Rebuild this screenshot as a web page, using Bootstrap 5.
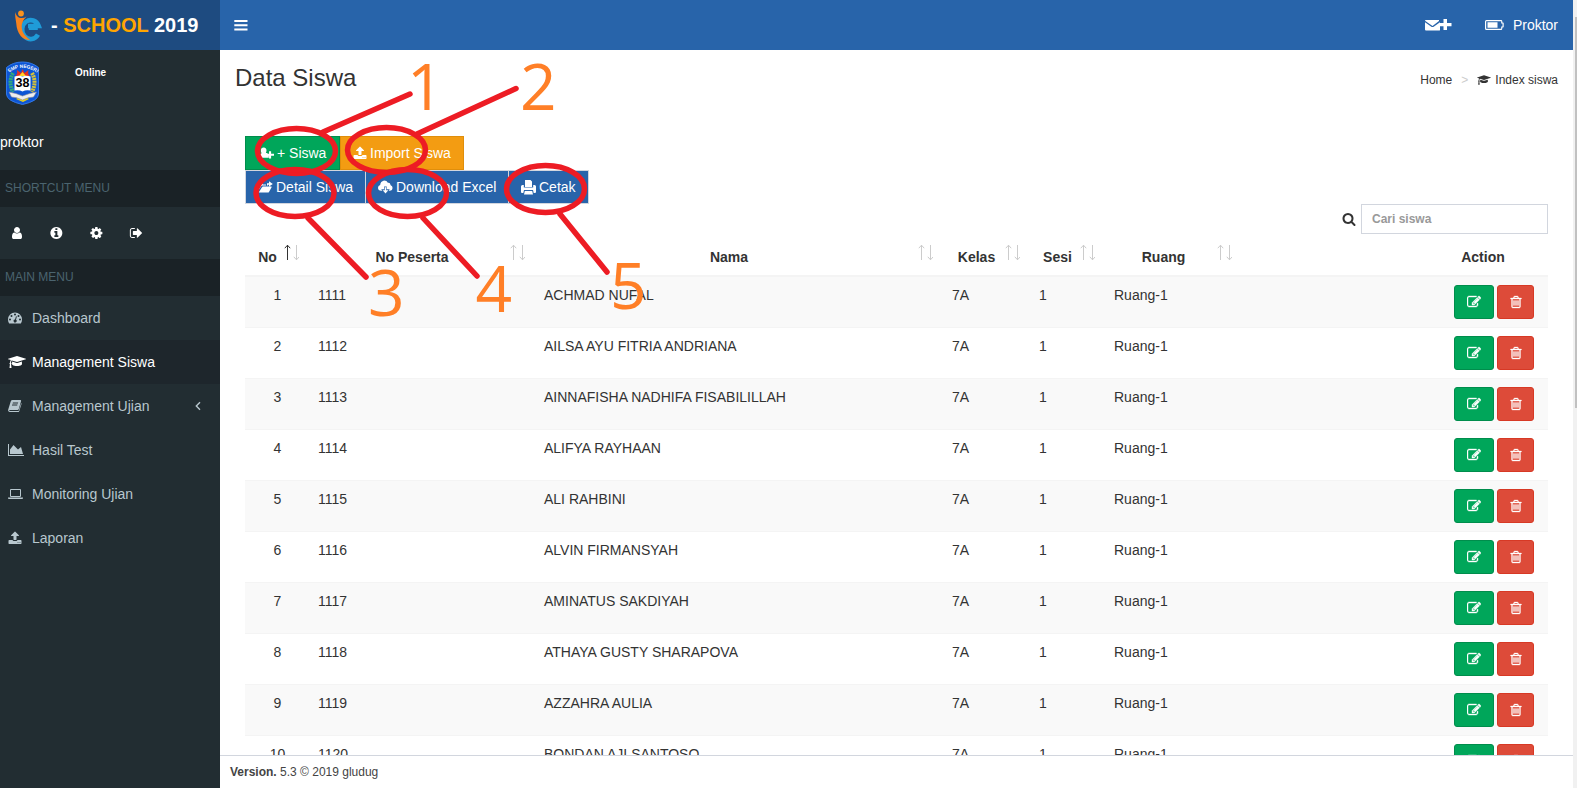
<!DOCTYPE html>
<html lang="id">
<head>
<meta charset="utf-8">
<title>e-School 2019 - Data Siswa</title>
<meta name="viewport" content="width=device-width, initial-scale=1">
<link rel="stylesheet" href="https://cdn.jsdelivr.net/npm/bootstrap@5.3.0/dist/css/bootstrap.min.css">
<style>
body{font-family:"Liberation Sans",Arial,sans-serif;font-size:14px;line-height:20px;color:#333;height:788px;overflow:hidden;background:#fff}
svg{fill:currentColor;display:block;flex:none}
.side{width:220px;background:#222d32;color:#fff}
.brand{height:50px;background:#1e4b80;font-size:20px;font-weight:700;padding-left:14px}
.brand span{color:orange}
.who{height:120px}
.shead{height:37px;background:#1a2226;color:#4b646f;font-size:12px;padding:8px 5px 9px}
.quick{height:52px}
.quick a{width:40px;color:#fff;padding-left:9px}
.menu a.item{height:44px;color:#b8c7ce;text-decoration:none;padding-left:8px;display:flex;align-items:center}
.menu a.item.active{background:#1e262c;color:#fff}
.menu i{width:24px;flex:none}
.topnav{height:50px;background:#2864aa;color:#fff}
.title{font-size:24px;line-height:26px;margin:0;font-weight:400}
.crumbs{font-size:12px}
.main{min-height:0;overflow:hidden}
.tools .btn{border-radius:0;font-size:14px;line-height:20px;color:#fff;display:flex;align-items:center;gap:3px;padding:6px 12px;height:34px;white-space:nowrap}
.g{background:#00a65a;border-color:#008d4c}.o{background:#f39c12;border-color:#e08e0b}
.b{background:#2864aa;border-color:#d2d6de}
.find{width:187px;height:30px;border:1px solid #d2d6de;border-radius:0;font-size:12px;font-weight:700;padding:5px 10px;background:#fff}
.find::placeholder{color:#999;opacity:1}
.grid-siswa{table-layout:fixed;width:1303px;margin:0;color:#333}
.grid-siswa th{padding:0 26px 8px 8px;height:40px;vertical-align:bottom;text-align:center;border-bottom:2px solid #f4f4f4;position:relative}
.grid-siswa th svg{position:absolute;right:9px;bottom:14px}
.grid-siswa td{height:51px;padding:8px 10px;border:0;border-bottom:1px solid #f4f4f4;vertical-align:top}
.grid-siswa tr:nth-child(odd) td{background:#f9f9f9}
.tools .act{height:34px;border-radius:3px;padding:0;justify-content:center}
.act.e{width:40px}.act.d{width:37px;background:#dd4b39;border-color:#d73925}
.foot{height:33px;border-top:1px solid #d2d6de;font-size:12px;color:#444;padding:6px 10px}
.bar{width:4px;background:#f1f1f1}
.bar div{margin:17px 0 0 2px;height:391px;background:#c1c1c1}
.marks{position:absolute;left:0;top:0;pointer-events:none}
</style>
</head>
<body class="d-flex">
<svg width="0" height="0" style="position:absolute">
<defs>
<symbol id="edit" viewBox="0 0 1792 1792"><path d="M888 1184l116-116-152-152-116 116v56h96v96h56zm440-720q-16-16-33 1l-350 350q-17 17-1 33t33-1l350-350q17-17 1-33zm80 594v190q0 119-84.5 203.5t-203.5 84.5h-832q-119 0-203.5-84.5t-84.5-203.5v-832q0-119 84.5-203.5t203.5-84.5h832q63 0 117 25 15 7 18 23 3 17-9 29l-49 49q-14 14-32 8-23-6-45-6h-832q-66 0-113 47t-47 113v832q0 66 47 113t113 47h832q66 0 113-47t47-113v-126q0-13 9-22l64-64q15-15 35-7t20 29zm-96-738l288 288-672 672h-288v-288zm444 132l-92 92-288-288 92-92q28-28 68-28t68 28l152 152q28 28 28 68t-28 68z" stroke="currentColor" stroke-width="50"/></symbol>
<symbol id="trash" viewBox="0 0 1792 1792"><path d="M704 736v576q0 14-9 23t-23 9h-64q-14 0-23-9t-9-23v-576q0-14 9-23t23-9h64q14 0 23 9t9 23zm256 0v576q0 14-9 23t-23 9h-64q-14 0-23-9t-9-23v-576q0-14 9-23t23-9h64q14 0 23 9t9 23zm256 0v576q0 14-9 23t-23 9h-64q-14 0-23-9t-9-23v-576q0-14 9-23t23-9h64q14 0 23 9t9 23zm128 724v-948h-896v948q0 22 7 40.5t14.5 27 10.5 8.5h832q3 0 10.5-8.5t14.5-27 7-40.5zm-672-1076h448l-48-117q-7-9-17-11h-317q-10 2-17 11zm928 32v64q0 14-9 23t-23 9h-96v948q0 83-47 143.5t-113 60.5h-832q-66 0-113-58.5t-47-141.5v-952h-96q-14 0-23-9t-9-23v-64q0-14 9-23t23-9h309l70-167q15-37 54-63t79-26h320q40 0 79 26t54 63l70 167h309q14 0 23 9t9 23z" stroke="currentColor" stroke-width="40"/></symbol>
<symbol id="upload" viewBox="0 0 1792 1792"><path d="M1344 1472q0-26-19-45t-45-19-45 19-19 45 19 45 45 19 45-19 19-45zm256 0q0-26-19-45t-45-19-45 19-19 45 19 45 45 19 45-19 19-45zm128-224v320q0 40-28 68t-68 28h-1472q-40 0-68-28t-28-68v-320q0-40 28-68t68-28h427q21 56 70.5 92t110.5 36h256q61 0 110.5-36t70.5-92h427q40 0 68 28t28 68zm-325-648q-17 40-59 40h-256v448q0 26-19 45t-45 19h-256q-26 0-45-19t-19-45v-448h-256q-42 0-59-40-17-39 14-69l448-448q18-19 45-19t45 19l448 448q31 30 14 69z"/></symbol>
<symbol id="cap" viewBox="0 0 2304 1792"><path d="M1774 836l18 316q4 69-82 128t-235 93.5-323 34.5-323-34.5-235-93.5-82-128l18-316 574 181q22 7 48 7t48-7zm530-324q0 23-22 31l-1120 352q-4 1-10 1t-10-1l-652-206q-43 34-71 111.5t-34 178.5q63 36 63 109 0 69-58 107l58 433q2 14-8 25-9 11-24 11h-192q-15 0-24-11-10-11-8-25l58-433q-58-38-58-107 0-73 65-111 11-207 98-330l-333-104q-22-8-22-31t22-31l1120-352q4-1 10-1t10 1l1120 352q22 8 22 31z"/></symbol>
<symbol id="sort" viewBox="0 0 15 17"><path d="M3.5 1v15M.8 4.2 3.5 1.2l2.7 3" fill="none" stroke="currentColor"/><path d="M12.5 1v15M9.8 12.8l2.7 3 2.7-3" fill="none" stroke="#ccc"/></symbol>
</defs>
</svg>

<aside class="side d-flex flex-column">
  <div class="brand d-flex align-items-center">
    <svg class="me-2" width="29" height="34" viewBox="0 0 29 34"><path d="M24 28.200a8.600 9.500 0 1 1 .7-8.700H14" transform="translate(0 -1.500)" fill="none" stroke="#1f9bd8" stroke-width="4.600"/><path d="M23.800 20h-9" stroke="#1f9bd8" stroke-width="4"/><circle cx="7" cy="5.500" r="2.900" fill="#f7921e"/><path d="M1 4q1.500 5 5 6 4 .5 6.500-1.500Q8 13 7.700 18q-.2 5 3 9 2.500 3 5.500 5-6 0-9.500-4-4-5-4.500-13Q1 9 1 4z" fill="#f7821e"/></svg>
    <div>- <span>SCHOOL</span> 2019</div>
  </div>
  <div class="who">
    <div class="d-flex" style="padding:11px 0 0 5px">
      <svg width="35" height="44" viewBox="0 0 35 44"><path d="M17.500 1C24 1 29 3 33.500 6.500V33q0 7-16 10.500Q1.500 40 1.500 33V6.500Q8 1 17.500 1z" fill="#0d55d5" stroke="#3279e8"/><path id="arc" d="M4 11.500Q17.500 2 31.500 11.500" fill="none"/><text font-size="4.800" font-weight="700" fill="#fff"><textPath href="#arc">SMP NEGERI</textPath></text><path d="M8 12q-5 9 0 19" fill="none" stroke="#35aa7a" stroke-width="4" stroke-dasharray="2 .7"/><path d="M27 12q5 9 0 19" fill="none" stroke="#d6c23b" stroke-width="4" stroke-dasharray="2 .7"/><path d="M11 15q2-3 1-6l4 3 1.500-4 2 4 4-3q-1 4 1 6z" fill="#e53222"/><path d="M14 15l3.500-4 3.500 4z" fill="#ffd428"/><path d="M9.500 15.500q4.500-1.500 8 0 4-1.500 8 0v14q-4.500-1-8 1-3.500-2-8-1z" fill="#fff"/><path d="M11 38q6-6 13 0l-6 3z" fill="#e8d21c"/><path d="M4 31q7 1 13.500 4Q25 32 31.500 31l-3 5q-5 0-11 3-6-3-11-3z" fill="#eee" stroke="#889" stroke-width=".6"/><text x="17.500" y="25.500" text-anchor="middle" font-size="12.500" font-weight="700" fill="#000">38</text></svg>
      <div style="font-size:10px;line-height:14px;font-weight:700;padding:5px 0 0 35px">Online</div>
    </div>
    <div style="padding-top:27px">proktor</div>
  </div>
  <div class="shead">SHORTCUT MENU</div>
  <div class="quick d-flex align-items-center">
    <a style="padding-left:10px"><svg width="14" height="14" viewBox="0 0 1792 1792"><path d="M1536 1399q0 109-62.500 187t-150.500 78h-854q-88 0-150.500-78t-62.500-187q0-85 8.500-160.500t31.500-152 58.500-131 94-89 134.500-34.500q131 128 313 128t313-128q76 0 134.500 34.500t94 89 58.500 131 31.500 152 8.500 160.500zm-256-887q0 159-112.500 271.500t-271.500 112.500-271.500-112.500-112.500-271.500 112.500-271.500 271.500-112.500 271.500 112.500 112.500 271.500z"/></svg></a>
    <a><svg width="14" height="14" viewBox="0 0 1700 1792"><path d="M1152 1376v-160q0-14-9-23t-23-9h-96v-512q0-14-9-23t-23-9h-320q-14 0-23 9t-9 23v160q0 14 9 23t23 9h96v320h-96q-14 0-23 9t-9 23v160q0 14 9 23t23 9h448q14 0 23-9t9-23zm-128-896v-160q0-14-9-23t-23-9h-192q-14 0-23 9t-9 23v160q0 14 9 23t23 9h192q14 0 23-9t9-23zm640 416q0 209-103 385.500t-279.500 279.500-385.500 103-385.500-103-279.500-279.500-103-385.500 103-385.500 279.500-279.500 385.500-103 385.500 103 279.500 279.500 103 385.500z"/></svg></a>
    <a><svg width="14" height="14" viewBox="0 0 1700 1792"><path d="M1152 896q0-106-75-181t-181-75-181 75-75 181 75 181 181 75 181-75 75-181zm512-109v222q0 12-8 23t-20 13l-185 28q-19 54-39 91 35 50 107 138 10 12 10 25t-9 23q-27 37-99 108t-94 71q-12 0-26-9l-138-108q-44 23-91 38-16 136-29 186-7 28-36 28h-222q-14 0-24.500-8.500t-11.500-21.500l-28-184q-49-16-90-37l-141 107q-10 9-25 9-14 0-25-11-126-114-165-168-7-10-7-23 0-12 8-23 15-21 51-66.500t54-70.500q-27-50-41-99l-183-27q-13-2-21-12.500t-8-23.500v-222q0-12 8-23t19-13l186-28q14-46 39-92-40-57-107-138-10-12-10-24 0-10 9-23 26-36 98.500-107.500t94.500-71.500q13 0 26 10l138 107q44-23 91-38 16-136 29-186 7-28 36-28h222q14 0 24.500 8.500t11.500 21.500l28 184q49 16 90 37l142-107q9-9 24-9 13 0 25 10 129 119 165 170 7 8 7 22 0 12-8 23-15 21-51 66.500t-54 70.500q26 50 41 98l183 28q13 2 21 12.500t8 23.500z"/></svg></a>
    <a><svg width="14" height="14" viewBox="0 0 1700 1792"><path d="M704 1440q0 4 1 20t.5 26.500-3 23.500-10 19.500-20.500 6.500h-320q-119 0-203.500-84.500t-84.500-203.500v-704q0-119 84.500-203.500t203.500-84.500h320q13 0 22.500 9.500t9.500 22.500q0 4 1 20t.5 26.500-3 23.500-10 19.500-20.500 6.500h-320q-66 0-113 47t-47 113v704q0 66 47 113t113 47h312l11.500 1 11.500 3 8 5.500 7 9 2 13.500zm928-544q0 26-19 45l-544 544q-19 19-45 19t-45-19-19-45v-288h-448q-26 0-45-19t-19-45v-384q0-26 19-45t45-19h448v-288q0-26 19-45t45-19 45 19l544 544q19 19 19 45z"/></svg></a>
  </div>
  <div class="shead">MAIN MENU</div>
  <nav class="menu">
    <a class="item" href="#"><i><svg width="14" height="14" viewBox="0 0 14 14"><path fill-rule="evenodd" d="M7 1.500a7 7 0 0 1 7 7q0 2-1 3.800-.2.200-.5.200h-11q-.3 0-.5-.2Q0 10.500 0 8.500a7 7 0 0 1 7-7zM2 7.500a1 1 0 1 0 0 2 1 1 0 0 0 0-2zm1.500-3.400a1 1 0 1 0 0 2 1 1 0 0 0 0-2zM7 2.500a1 1 0 1 0 0 2 1 1 0 0 0 0-2zm3.500 1.600a1 1 0 1 0 0 2 1 1 0 0 0 0-2zM12 7.500a1 1 0 1 0 0 2 1 1 0 0 0 0-2zM8 5.300 7 8.500a1.500 1.500 0 1 0 1 .3l.9-3.200z"/></svg></i>Dashboard</a>
    <a class="item active" href="#"><i><svg width="18" height="14"><use href="#cap"/></svg></i>Management Siswa</a>
    <a class="item" href="#"><i><svg width="14" height="14" viewBox="0 0 14 14"><path fill-rule="evenodd" d="M4.500 1h7.800q1 0 .8 1l-2.300 8q-.3 1-1.300 1H2q-.8 0-.8.500.1.600.8.600h8q.6 0 .8-.6L13.200 4q.5.300.3 1l-2.300 7.200q-.3.900-1.200.9H2q-1.400 0-1.800-1.300-.2-.7.100-1.500L2.800 2.200Q3.200 1 4.500 1zm.4 2.500-.3.900h5.300l.3-.9zM4.200 5.600l-.3.900h5.300l.3-.9z"/></svg></i>Management Ujian<svg style="margin-left:45px" width="6" height="10" viewBox="0 0 6 10"><path d="M5 1.200 1.300 5 5 8.800" fill="none" stroke="currentColor" stroke-width="1.400"/></svg></a>
    <a class="item" href="#"><i><svg width="16" height="14" viewBox="0 0 2048 1792"><path d="M2048 1536v128h-2048v-1536h128v1408h1920zm-384-1024l256 896h-1664v-576l448-576 576 576z"/></svg></i>Hasil Test</a>
    <a class="item" href="#"><i><svg width="15" height="14" viewBox="0 0 15 14"><path fill-rule="evenodd" d="M3 2h9q1 0 1 1v6q0 1-1 1H3q-1 0-1-1V3q0-1 1-1zm0 1v6h9V3zM0 10.500h15v.8q0 .7-1 .7H1q-1 0-1-.7z"/></svg></i>Monitoring Ujian</a>
    <a class="item" href="#"><i><svg width="14" height="14"><use href="#upload"/></svg></i>Laporan</a>
  </nav>
</aside>

<div class="d-flex flex-column flex-grow-1 main">
  <header class="topnav d-flex align-items-center flex-shrink-0" style="padding:0 15px 0 14px">
    <svg width="14" height="14" viewBox="0 0 14 14"><path d="M.3 2h13.200v2H.3zM.3 6.200h13.200v2H.3zM.3 10.500h13.200v2H.3z"/></svg>
    <svg class="ms-auto" width="27" height="14" viewBox="0 0 27 14"><path d="M0 3q0-1 1-1h13v1L7.500 8 0 2.800zM0 4.200 6 8.500q1.500 1 3 0L15 4.200V12q0 .5-1 .5H1q-1 0-1-1zM18.500 1H22v4h4.500v3.200H22V12h-3.500V8.200h-4V5h4z"/></svg>
    <svg style="margin:0 9px 0 33px" width="19" height="14" viewBox="0 0 19 14"><path fill-rule="evenodd" d="M1.500 2H16q1.300 0 1.300 1.200V4.500h.7q.7 0 .7.700v3.600q0 .7-.7.700h-.7v1q0 1.500-1.300 1.500H1.500Q0 12 0 10.500v-7Q0 2 1.500 2zM1.200 3.200v7.600h15V8.600h1.300V5.400h-1.300V3.200zM2.500 4.200h10v5.600h-10z"/></svg>
    <span>Proktor</span>
  </header>
  <section class="d-flex justify-content-between" style="padding:15px 15px 0">
    <h1 class="title">Data Siswa</h1>
    <div class="crumbs d-flex align-items-center" style="height:30px"><span>Home</span><span style="color:#ccc;margin:0 9px 0 9px">&gt;</span><svg width="14" height="12" class="me-1"><use href="#cap"/></svg><span>Index siswa</span></div>
  </section>
  <section style="padding:41px 25px 0" class="tools">
    <div class="d-flex">
      <button class="btn g" style="width:95px;padding-left:13px"><svg width="15" height="14" viewBox="0 0 16 14"><path d="M5 1c2 0 3.200 1.500 3 3.500Q7.800 6 7.300 7H9v3h1.500v2H1Q0 12 0 10.500q0-2.500 2.800-3.300Q2 6 2 4.300 2 1 5 1zM10.700 5h2.200v2.800H16V10h-3.100v2.800h-2.200V10H8V7.800h2.700z"/></svg>+ Siswa</button>
      <button class="btn o" style="width:124px"><svg width="14" height="14"><use href="#upload"/></svg>Import Siswa</button>
    </div>
    <div class="d-flex">
      <button class="btn b" style="width:121px"><svg width="15" height="14" viewBox="0 0 15 14"><path d="M0 11V4q0-1 1-1h3l1 1.500h3v1H4.500q-1 0-1.500 1zM.7 12.500 4 7.200q.3-.6 1-.6h8.200q.8 0 .4.700l-2.600 4.600q-.4.600-1 .6zM9 5.500V3.300h2V1.200l3.800 2.800L11 6.500V4.700h-1v.8z"/></svg>Detail Siswa</button>
      <button class="btn b" style="width:143px;border-left:0;padding-left:12px"><svg width="15" height="14" viewBox="0 0 16 14"><path fill-rule="evenodd" d="M3.500 11Q0 11 0 7.800 0 5.500 2.300 4.800 2.500 1 6.500 0q3 0 4 2.500 2.500-.5 3 2.500 2 .5 2 2.800Q15.500 11 12.500 11h-1l1-1.500H9.300V6.500H6.500v3H3.400L4.600 11zM7.200 7.300h1.500v3.200h2.300L8 14l-3-3.500h2.200z"/></svg>Download Excel</button>
      <button class="btn b" style="width:80px;border-left:0"><svg width="15" height="15" viewBox="0 0 15 15"><path fill-rule="evenodd" d="M4 0h5.500L11 1.500V7H4zM0 6.500Q0 5 1.500 5h1.300v2.500h9.400V5h1.300Q15 5 15 6.500V12q0 1-1 1h-1.300l-.7-3H3l-.7 3H1q-1 0-1-1zM3.800 11h7.400l.8 3.500H3z"/></svg>Cetak</button>
    </div>
    <div class="d-flex justify-content-end align-items-center" style="gap:5px">
      <svg width="14" height="14" viewBox="0 0 1792 1792"><path d="M1216 832q0-185-131.500-316.500t-316.500-131.500-316.500 131.500-131.500 316.500 131.500 316.500 316.500 131.500 316.500-131.500 131.500-316.500zm512 832q0 52-38 90t-90 38q-54 0-90-38l-343-342q-179 124-399 124-143 0-273.500-55.500t-225-150-150-225-55.500-273.500 55.500-273.500 150-225 225-150 273.500-55.500 273.500 55.500 225 150 150 225 55.500 273.500q0 220-124 399l343 343q37 37 37 90z"/></svg>
      <input class="find" placeholder="Cari siswa">
    </div>
    <table class="table grid-siswa" style="margin-top:2px">
      <colgroup><col style="width:63px"><col style="width:226px"><col style="width:408px"><col style="width:87px"><col style="width:75px"><col style="width:137px"><col style="width:176px"><col style="width:131px"></colgroup>
      <thead><tr id="head"></tr></thead>
      <tbody id="rows"></tbody>
    </table>
  </section>
  <div class="flex-grow-1"></div>
</div>
<div class="bar"><div></div></div>

<svg class="marks" width="1577" height="788" viewBox="0 0 1577 788">
  <g fill="#ff7f27" font-family="'Open Sans','Noto Sans',sans-serif" font-size="64">
    <text x="407" y="109.500">1</text><text x="520" y="109.500">2</text><text x="368" y="316">3</text><text x="475.500" y="312">4</text><text x="610" y="309">5</text>
  </g>
  <g fill="none" stroke="#ed1c24" stroke-width="5.500" stroke-linecap="round">
    <ellipse cx="296.500" cy="151" rx="39" ry="22.500"/><ellipse cx="386.500" cy="150" rx="39" ry="22.500"/><ellipse cx="295" cy="193" rx="39" ry="23.500"/><ellipse cx="407.500" cy="193" rx="39" ry="23.500"/><ellipse cx="545.500" cy="189" rx="39" ry="23.500"/>
    <path d="M323 132l87-38M417 134l99-45.500M308 218l58 59M423 218l54 58M560 214l47 58"/>
  </g>
</svg>
<script>
var heads = ["No", "No Peserta", "Nama", "Kelas", "Sesi", "Ruang", "", "Action"];
document.getElementById("head").innerHTML = heads.map(function (h, i) {
  if (i > 5) return '<th style="padding-left:1px;padding-right:0">' + h + '</th>';
  return '<th>' + h + '<svg width="15" height="17" style="color:' + (i ? '#ccc' : '#333') + '"><use href="#sort"/></svg></th>';
}).join("");
var names = ["ACHMAD NUFAL", "AILSA AYU FITRIA ANDRIANA", "AINNAFISHA NADHIFA FISABILILLAH", "ALIFYA RAYHAAN", "ALI RAHBINI", "ALVIN FIRMANSYAH", "AMINATUS SAKDIYAH", "ATHAYA GUSTY SHARAPOVA", "AZZAHRA AULIA", "BONDAN AJI SANTOSO"];
document.getElementById("rows").innerHTML = names.map(function (n, i) {
  return '<tr><td class="text-center pe-2">' + (i + 1) + '</td><td>' + (1111 + i) + '</td><td>' + n + '</td><td>7A</td><td>1</td><td>Ruang-1</td><td></td>' +
    '<td><div class="d-flex justify-content-end" style="gap:3px;margin-right:4px"><button class="btn g act e"><svg width="14" height="14"><use href="#edit"/></svg></button><button class="btn act d"><svg width="14" height="14"><use href="#trash"/></svg></button></div></td></tr>';
}).join("");
</script>
<footer class="foot position-fixed bottom-0 bg-white" style="left:220px;right:4px"><b>Version.</b> 5.3 © 2019 gludug</footer>
<script src="https://cdn.jsdelivr.net/npm/bootstrap@5.3.0/dist/js/bootstrap.bundle.min.js"></script>
</body>
</html>
